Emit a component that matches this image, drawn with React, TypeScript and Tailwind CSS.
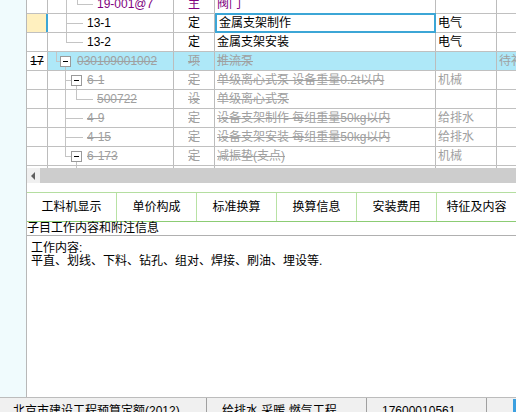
import React from "react";

type Seg = [number, number, number, number];

type Row = {
  no?: string;
  code: string;
  indent: number;
  lines: Seg[];
  box?: number;
  type: string;
  name: string;
  major: string;
  extra?: string;
  tone: "black" | "purple" | "gray";
  strikeNo?: boolean;
  hl?: boolean;
  sel?: boolean;
};

const V = (x: number, y1: number, y2: number): Seg => [x + 0.5, y1, x + 0.5, y2];
const H = (x1: number, x2: number): Seg => [x1, 9.5, x2, 9.5];

const rows: Row[] = [
  { code: "19-001@7", indent: 49, lines: [V(18, 0, 18), V(29, 0, 9.5), H(29, 45)], type: "主", name: "阀门", major: "", tone: "purple" },
  { code: "13-1", indent: 39, lines: [V(18, 0, 18), H(18, 35)], type: "定", name: "金属支架制作", major: "电气", tone: "black", sel: true },
  { code: "13-2", indent: 39, lines: [V(18, 0, 9.5), H(18, 35)], type: "定", name: "金属支架安装", major: "电气", tone: "black" },
  { no: "17", code: "030109001002", indent: 29, lines: [V(8, 0, 9.5), H(8, 12), V(17, 15, 18)], box: 12, type: "项", name: "推流泵", major: "", extra: "待补", tone: "gray", strikeNo: true, hl: true },
  { code: "6-1", indent: 39, lines: [V(17, 0, 18), H(17, 23), V(28, 15, 18)], box: 23, type: "定", name: "单级离心式泵 设备重量0.2t以内", major: "机械", tone: "gray" },
  { code: "500722", indent: 49, lines: [V(17, 0, 18), V(28, 0, 9.5), H(28, 45)], type: "设", name: "单级离心式泵", major: "", tone: "gray" },
  { code: "4-9", indent: 39, lines: [V(17, 0, 18), H(17, 35)], type: "定", name: "设备支架制作 每组重量50kg以内", major: "给排水", tone: "gray" },
  { code: "4-15", indent: 39, lines: [V(17, 0, 18), H(17, 35)], type: "定", name: "设备支架安装 每组重量50kg以内", major: "给排水", tone: "gray" },
  { code: "6-173", indent: 39, lines: [V(17, 0, 9.5), H(17, 23), V(28, 15, 18)], box: 23, type: "定", name: "减振垫(支点)", major: "机械", tone: "gray" },
  { code: "", indent: 49, lines: [V(28, 0, 18)], type: "", name: "", major: "", tone: "gray" },
];

const toneClass = {
  black: "text-black",
  purple: "text-[#800080]",
  gray: "text-[#a0a0a0] line-through decoration-[#a0a0a0]",
};

function Tree({ row }: { row: Row }) {
  return (
    <svg width={row.indent} height={18} className="shrink-0">
      {row.lines.map(([x1, y1, x2, y2], i) => (
        <line key={i} x1={x1} y1={y1} x2={x2} y2={y2} stroke="#c4c4c4" strokeWidth={1} />
      ))}
      {row.box !== undefined && (
        <g>
          <rect x={row.box + 0.5} y={4.5} width={10} height={10} fill="#fff" stroke="#9a9a9a" />
          <line x1={row.box + 3} y1={9.5} x2={row.box + 8} y2={9.5} stroke="#000" />
        </g>
      )}
    </svg>
  );
}

function GridRow({ row }: { row: Row }) {
  const t = toneClass[row.tone];
  const bg = row.hl ? "bg-[#aee8f8]" : "";
  return (
    <div className="flex h-[19px] border-b border-[#c0c0c0] shrink-0">
      <div
        className={`w-[21px] shrink-0 flex items-center justify-center ${
          row.sel ? "bg-[#fff0bf] border-r-2 border-[#3ca6d6]" : "border-r border-[#bcbcbc]"
        }`}
      >
        {row.no && <span className={row.strikeNo ? "line-through" : ""}>{row.no}</span>}
      </div>
      <div className={`w-[126px] shrink-0 flex items-center border-r border-[#bcbcbc] ${bg}`}>
        <Tree row={row} />
        <span className={`whitespace-nowrap ${t}`}>{row.code}</span>
      </div>
      <div className={`w-[41px] shrink-0 flex items-center justify-center border-r border-[#bcbcbc] ${bg}`}>
        <span className={t}>{row.type}</span>
      </div>
      <div
        className={`w-[221px] shrink-0 flex items-center pl-[2px] ${bg} ${
          row.sel ? "border-2 border-[#3ca6d6] -mt-px h-[20px]" : "border-r border-[#bcbcbc]"
        }`}
      >
        <span className={`whitespace-nowrap ${t}`}>{row.name}</span>
      </div>
      <div className={`w-[61px] shrink-0 flex items-center pl-[2px] border-r border-[#bcbcbc] ${bg}`}>
        <span className={`whitespace-nowrap ${row.tone === "gray" ? "text-[#a0a0a0]" : t}`}>{row.major}</span>
      </div>
      <div className={`flex-1 min-w-0 flex items-center pl-[2px] overflow-hidden ${bg}`}>
        <span className="whitespace-nowrap text-[#a0a0a0]">{row.extra}</span>
      </div>
    </div>
  );
}

const tabs = ["工料机显示", "单价构成", "标准换算", "换算信息", "安装费用", "特征及内容"];

export default function App() {
  return (
    <div
      className="w-[516px] h-[412px] flex flex-col overflow-hidden bg-white text-[12px] leading-[13px] text-black"
      style={{ fontFamily: '"Liberation Sans", "Noto Sans CJK SC", sans-serif' }}
    >
      <div className="flex flex-1 min-h-0">
        <div className="w-[27px] shrink-0 bg-[#f0fbfd] border-r border-[#b8b8b8]" />
        <div className="flex-1 min-w-0 flex flex-col">
          {/* grid */}
          <div className="h-[168px] shrink-0 overflow-hidden">
            <div className="-mt-[5px] flex flex-col">
              {rows.map((r, i) => (
                <GridRow key={i} row={r} />
              ))}
            </div>
          </div>
          {/* horizontal scrollbar */}
          <div className="h-[15px] shrink-0 flex bg-[#cdcdcd]">
            <div className="w-[13px] bg-[#f0f0f0] flex items-center justify-center">
              <svg width="5" height="8" viewBox="0 0 5 8">
                <path d="M4 0 L0 4 L4 8 Z" fill="#606060" />
              </svg>
            </div>
          </div>
          <div className="h-[9px] shrink-0" />
          {/* tabs */}
          <div className="h-[30px] shrink-0 flex border-t border-b border-t-[#b4dea0] border-b-[#8ccc74]">
            {tabs.map((t, i) => (
              <div
                key={t}
                className={`${i === 0 ? "w-[90px]" : "w-[80px]"} shrink-0 flex items-center justify-center border-r border-[#b8e2a4] whitespace-nowrap`}
              >
                {t}
              </div>
            ))}
          </div>
          <div className="h-[14px] shrink-0 border-b border-[#b0b0b0] leading-[13px] whitespace-nowrap">
            子目工作内容和附注信息
          </div>
          <div className="flex-1 min-h-0 pl-[4px] pt-[6px] leading-[13px]">
            <div>工作内容:</div>
            <div>平直、划线、下料、钻孔、组对、焊接、刷油、埋设等.</div>
          </div>
        </div>
      </div>
      {/* status bar */}
      <div className="h-[15px] shrink-0 flex border-t border-[#bcbcbc] bg-[#f0f0f0] overflow-hidden">
        <div className="w-[207px] shrink-0 pl-[13px] pt-[7px] whitespace-nowrap border-r border-[#a0a0a0]">
          北京市建设工程预算定额(2012)
        </div>
        <div className="w-[160px] shrink-0 pl-[15px] pt-[7px] whitespace-nowrap border-r border-[#a0a0a0]">
          给排水 采暖 燃气工程
        </div>
        <div className="w-[120px] shrink-0 pl-[15px] pt-[7px] whitespace-nowrap border-r border-[#a0a0a0]">
          17600010561
        </div>
        <div className="flex-1" />
        <div className="w-[3px] bg-[#3ca0e0] mt-[1px]" />
      </div>
    </div>
  );
}
